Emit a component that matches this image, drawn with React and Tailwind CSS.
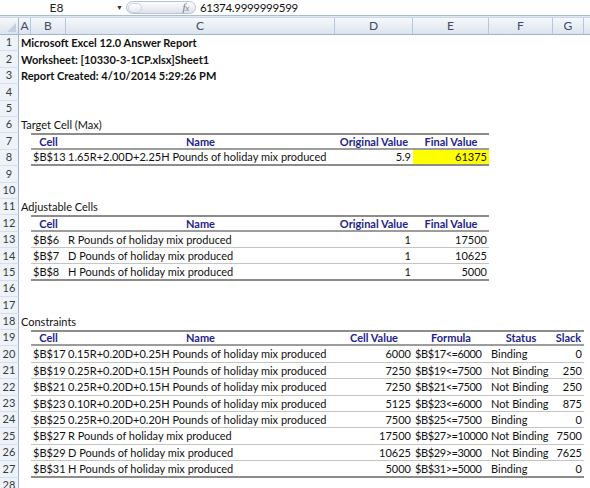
import React from "react";

const rowHead = "w-[19px] shrink-0 h-full flex items-center justify-center bg-[#eef3fa] border-r border-r-[#9eb6ce] border-b border-b-[#d5e0ee] text-[11px] text-[#3a3a3a]";

const Row = ({ n, children }) => (
    <div className="flex h-[16.4px] shrink-0">
        <div className={rowHead}>{n}</div>
        {children}
    </div>
);

// table styles
const top = "border-t-2 border-t-[#8c8c8c]";
const head = "border-b-2 border-b-[#9c9c9c] font-bold text-[#23238c] justify-center";
const mid = "border-b border-b-[#c4c4c4]";
const last = "border-b-2 border-b-[#8c8c8c]";

const C = ({ w, cls = "", children }) => (
    <div className={`${w} shrink-0 h-full flex items-center px-[2px] pt-[1px] whitespace-nowrap ${cls}`}>{children}</div>
);

const Title = ({ n, bold, text }) => (
    <Row n={n}>
        <div className={`pl-[2px] pt-[1px] flex items-center whitespace-nowrap ${bold ? "font-bold" : ""}`}>{text}</div>
    </Row>
);

const Empty = ({ n }) => <Row n={n} />;

const adjustable = [
    ["$B$6", "R Pounds of holiday mix produced", "1", "17500"],
    ["$B$7", "D Pounds of holiday mix produced", "1", "10625"],
    ["$B$8", "H Pounds of holiday mix produced", "1", "5000"],
];

const constraints = [
    ["$B$17", "0.15R+0.20D+0.25H Pounds of holiday mix produced", "6000", "$B$17<=6000", "Binding", "0"],
    ["$B$19", "0.25R+0.20D+0.15H Pounds of holiday mix produced", "7250", "$B$19<=7500", "Not Binding", "250"],
    ["$B$21", "0.25R+0.20D+0.15H Pounds of holiday mix produced", "7250", "$B$21<=7500", "Not Binding", "250"],
    ["$B$23", "0.10R+0.20D+0.25H Pounds of holiday mix produced", "5125", "$B$23<=6000", "Not Binding", "875"],
    ["$B$25", "0.25R+0.20D+0.20H Pounds of holiday mix produced", "7500", "$B$25<=7500", "Binding", "0"],
    ["$B$27", "R Pounds of holiday mix produced", "17500", "$B$27>=10000", "Not Binding", "7500"],
    ["$B$29", "D Pounds of holiday mix produced", "10625", "$B$29>=3000", "Not Binding", "7625"],
    ["$B$31", "H Pounds of holiday mix produced", "5000", "$B$31>=5000", "Binding", "0"],
];

const colHead = "shrink-0 h-full flex items-center justify-center border-r border-r-[#b5c7dc] text-[12px] text-[#3d4c63]";

export default function App() {
    return (
        <div className="w-[590px] h-[488px] overflow-hidden bg-white text-[11px] text-[#111] font-['Lato',sans-serif] flex flex-col">
            {/* formula bar */}
            <div className="h-[15px] shrink-0 flex items-center bg-white">
                <div className="w-[113px] text-center text-[12px] text-[#222]">E8</div>
                <div className="w-[13px] flex justify-center text-[7px] text-[#333]">▼</div>
                <div className="w-[70px] h-[13px] rounded-full border border-[#b9c3cf] bg-gradient-to-b from-[#fbfcfd] to-[#dde3ea] flex items-center justify-between px-[1px]">
                    <div className="w-[14px] h-[10px] rounded-full bg-gradient-to-b from-white to-[#e6eaef] border border-[#cdd4dc]" />
                    <span className="pr-[5px] text-[11px] italic text-[#777] font-['Liberation_Serif',serif]">f<span className="text-[8px]">x</span></span>
                </div>
                <div className="pl-[4px] text-[11.5px] tracking-[-0.3px] text-[#111]">61374.9999999599</div>
            </div>
            <div className="h-[3px] shrink-0 border-t border-t-[#a9bdd5] border-b border-b-[#c9d7e8] bg-[#dfe8f3]" />
            {/* column headers */}
            <div className="h-[17px] shrink-0 flex bg-gradient-to-b from-[#f5f8fc] to-[#dce4ee] border-b border-b-[#9eb6ce]">
                <div className="w-[19px] shrink-0 h-full border-r border-r-[#9eb6ce] flex items-end justify-end p-[2px]">
                    <div className="w-0 h-0 border-l-[9px] border-l-transparent border-b-[9px] border-b-[#c3cfdd]" />
                </div>
                <div className={`w-[12px] ${colHead}`}>A</div>
                <div className={`w-[35px] ${colHead}`}>B</div>
                <div className={`w-[269px] ${colHead}`}>C</div>
                <div className={`w-[78px] ${colHead}`}>D</div>
                <div className={`w-[76px] ${colHead}`}>E</div>
                <div className={`w-[64px] ${colHead}`}>F</div>
                <div className={`w-[31px] ${colHead}`}>G</div>
                <div className="flex-1" />
            </div>

            <div className="flex-1 flex flex-col overflow-hidden">
                <Title n={1} bold text="Microsoft Excel 12.0 Answer Report" />
                <Title n={2} bold text="Worksheet: [10330-3-1CP.xlsx]Sheet1" />
                <Title n={3} bold text="Report Created: 4/10/2014 5:29:26 PM" />
                <Empty n={4} />
                <Empty n={5} />
                <Title n={6} text="Target Cell (Max)" />
                <Row n={7}>
                    <C w="w-[12px]" />
                    <C w="w-[35px]" cls={`${top} ${head}`}>Cell</C>
                    <C w="w-[269px]" cls={`${top} ${head}`}>Name</C>
                    <C w="w-[78px]" cls={`${top} ${head}`}>Original Value</C>
                    <C w="w-[76px]" cls={`${top} ${head}`}>Final Value</C>
                </Row>
                <Row n={8}>
                    <C w="w-[12px]" />
                    <C w="w-[35px]" cls={last}>$B$13</C>
                    <C w="w-[269px]" cls={last}>1.65R+2.00D+2.25H Pounds of holiday mix produced</C>
                    <C w="w-[78px]" cls={`${last} justify-end`}>5.9</C>
                    <C w="w-[76px]" cls={`${last} justify-end bg-[#ffff00]`}>61375</C>
                </Row>
                <Empty n={9} />
                <Empty n={10} />
                <Title n={11} text="Adjustable Cells" />
                <Row n={12}>
                    <C w="w-[12px]" />
                    <C w="w-[35px]" cls={`${top} ${head}`}>Cell</C>
                    <C w="w-[269px]" cls={`${top} ${head}`}>Name</C>
                    <C w="w-[78px]" cls={`${top} ${head}`}>Original Value</C>
                    <C w="w-[76px]" cls={`${top} ${head}`}>Final Value</C>
                </Row>
                {adjustable.map((r, i) => {
                    const b = i === adjustable.length - 1 ? last : mid;
                    return (
                        <Row n={13 + i} key={r[0]}>
                            <C w="w-[12px]" />
                            <C w="w-[35px]" cls={b}>{r[0]}</C>
                            <C w="w-[269px]" cls={b}>{r[1]}</C>
                            <C w="w-[78px]" cls={`${b} justify-end`}>{r[2]}</C>
                            <C w="w-[76px]" cls={`${b} justify-end`}>{r[3]}</C>
                        </Row>
                    );
                })}
                <Empty n={16} />
                <Empty n={17} />
                <Title n={18} text="Constraints" />
                <Row n={19}>
                    <C w="w-[12px]" />
                    <C w="w-[35px]" cls={`${top} ${head}`}>Cell</C>
                    <C w="w-[269px]" cls={`${top} ${head}`}>Name</C>
                    <C w="w-[78px]" cls={`${top} ${head}`}>Cell Value</C>
                    <C w="w-[76px]" cls={`${top} ${head}`}>Formula</C>
                    <C w="w-[64px]" cls={`${top} ${head}`}>Status</C>
                    <C w="w-[31px]" cls={`${top} ${head}`}>Slack</C>
                </Row>
                {constraints.map((r, i) => {
                    const b = i === constraints.length - 1 ? last : mid;
                    return (
                        <Row n={20 + i} key={r[0]}>
                            <C w="w-[12px]" />
                            <C w="w-[35px]" cls={b}>{r[0]}</C>
                            <C w="w-[269px]" cls={b}>{r[1]}</C>
                            <C w="w-[78px]" cls={`${b} justify-end`}>{r[2]}</C>
                            <C w="w-[76px]" cls={`${b} tracking-[-0.4px]`}>{r[3]}</C>
                            <C w="w-[64px]" cls={b}>{r[4]}</C>
                            <C w="w-[31px]" cls={`${b} justify-end`}>{r[5]}</C>
                        </Row>
                    );
                })}
                <Empty n={28} />
            </div>
        </div>
    );
}
